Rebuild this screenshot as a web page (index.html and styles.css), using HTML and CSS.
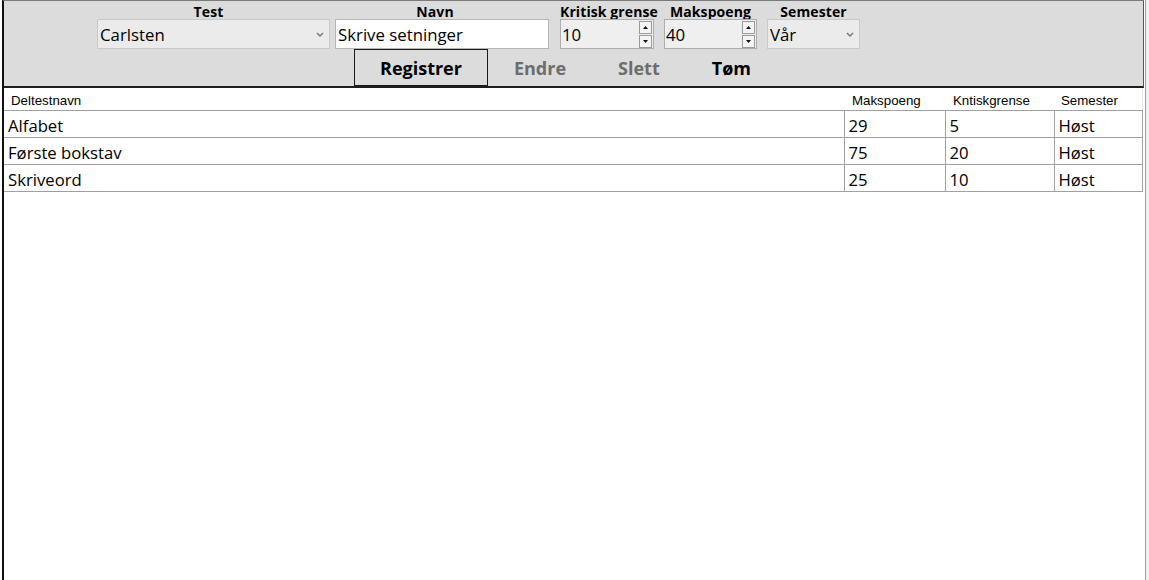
FILE: index.html
```html
<!DOCTYPE html>
<html>
<head>
<meta charset="utf-8">
<link rel="stylesheet" href="styles.css">
</head>
<body>
<div class="app">
  <div class="frame">
    <div class="panel">
      <div class="fields">
        <div class="field f-test">
          <div class="label">Test</div>
          <div class="select">
            <span>Carlsten</span>
            <svg class="chev" width="8" height="5" viewBox="0 0 8 5"><path d="M1 1 L4 4 L7 1" fill="none" stroke="#777" stroke-width="1.4"/></svg>
          </div>
        </div>
        <div class="field f-navn">
          <div class="label">Navn</div>
          <div class="text">Skrive setninger</div>
        </div>
        <div class="field f-krit">
          <div class="label">Kritisk grense</div>
          <div class="spin">
            <span>10</span>
            <div class="spinbtns">
              <div class="sb"><svg width="5" height="3" viewBox="0 0 5 3"><path d="M0 3 L2.5 0 L5 3Z" fill="#111"/></svg></div>
              <div class="sb"><svg width="5" height="3" viewBox="0 0 5 3"><path d="M0 0 L2.5 3 L5 0Z" fill="#111"/></svg></div>
            </div>
          </div>
        </div>
        <div class="field f-maks">
          <div class="label">Makspoeng</div>
          <div class="spin">
            <span>40</span>
            <div class="spinbtns">
              <div class="sb"><svg width="5" height="3" viewBox="0 0 5 3"><path d="M0 3 L2.5 0 L5 3Z" fill="#111"/></svg></div>
              <div class="sb"><svg width="5" height="3" viewBox="0 0 5 3"><path d="M0 0 L2.5 3 L5 0Z" fill="#111"/></svg></div>
            </div>
          </div>
        </div>
        <div class="field f-sem">
          <div class="label">Semester</div>
          <div class="select">
            <span>Vår</span>
            <svg class="chev" width="8" height="5" viewBox="0 0 8 5"><path d="M1 1 L4 4 L7 1" fill="none" stroke="#777" stroke-width="1.4"/></svg>
          </div>
        </div>
      </div>
      <div class="buttons">
        <div class="btn focused">Registrer</div>
        <div class="btn disabled">Endre</div>
        <div class="btn disabled">Slett</div>
        <div class="btn">Tøm</div>
      </div>
    </div>
    <div class="tablewrap">
      <table class="grid">
        <thead>
          <tr>
            <th class="c1">Deltestnavn</th>
            <th class="c2">Makspoeng</th>
            <th class="c3">Kntiskgrense</th>
            <th class="c4">Semester</th>
          </tr>
        </thead>
        <tbody>
          <tr><td class="c1">Alfabet</td><td class="c2">29</td><td class="c3">5</td><td class="c4">Høst</td></tr>
          <tr><td class="c1">Første bokstav</td><td class="c2">75</td><td class="c3">20</td><td class="c4">Høst</td></tr>
          <tr><td class="c1">Skriveord</td><td class="c2">25</td><td class="c3">10</td><td class="c4">Høst</td></tr>
        </tbody>
      </table>
    </div>
  </div>
</div>
</body>
</html>
```
FILE: styles.css
```css
html {
  background: #f0f0f0;
}
body {
  margin: 0;
  font-family: "Open Sans", "DejaVu Sans", sans-serif;
  color: #000;
}
.app {
  width: 1146px;
  height: 580px;
  background: #fff;
  border-right: 1px solid #a0a0a0;
  box-sizing: border-box;
  padding-left: 2px;
}
.frame {
  height: 580px;
  border-left: 2px solid #111;
  border-top: 1px solid #7a7a7a;
  box-sizing: border-box;
  width: 1142px;
}
.panel {
  background: #dcdcdc;
  height: 87px;
  border-bottom: 2px solid #1e1e1e;
  border-right: 1px solid #555;
  box-sizing: border-box;
}
.fields {
  display: flex;
  padding-left: 93px;
  padding-top: 2px;
}
.field {
  display: flex;
  flex-direction: column;
  align-items: center;
}
.label {
  font-weight: 700;
  font-size: 14px;
  line-height: 16px;
  height: 16px;
  padding-top: 1px;
  margin-bottom: -1px;
  white-space: nowrap;
  letter-spacing: 0.1px;
}
.f-test { width: 233px; }
.f-test .label { margin-right: 10px; }
.f-navn { width: 214px; margin-left: 5px; }
.f-navn .label { margin-right: 14px; }
.f-krit { width: 97px; margin-left: 11px; align-items: flex-start; }
.f-maks { width: 93px; margin-left: 7px; }
.f-sem { width: 93px; margin-left: 10px; }
.select, .text, .spin {
  height: 30px;
  box-sizing: border-box;
  display: flex;
  align-items: center;
  font-size: 16.8px;
  width: 100%;
  position: relative;
}
.select {
  background: #ebebeb;
  border: 1px solid #c9c9c9;
  padding-left: 2px;
  justify-content: space-between;
  padding-right: 5px;
}
.text {
  background: #fff;
  border: 1px solid #b5b5b5;
  padding-left: 2px;
}
.spin {
  background: #efefef;
  border: 1px solid #adadad;
  padding-left: 1px;
  justify-content: space-between;
  padding-right: 1px;
  width: 94px;
}
.f-maks .spin { width: 93px; }
.spinbtns {
  display: flex;
  flex-direction: column;
  gap: 1px;
}
.sb {
  width: 11px;
  height: 11px;
  border: 1px solid #9a9a9a;
  background: #f4f4f4;
  display: flex;
  align-items: center;
  justify-content: center;
}
.buttons {
  display: flex;
  padding-left: 350px;
  margin-top: 0;
}
.btn {
  height: 37px;
  box-sizing: border-box;
  display: flex;
  align-items: center;
  padding: 0 25px;
  font-weight: 700;
  font-size: 18px;
  border: 1px solid transparent;
}
.btn.focused {
  border-color: #1a1a1a;
}
.btn.disabled {
  color: #6d6d6d;
}
.tablewrap {
  width: 1140px;
}
.grid {
  border-collapse: collapse;
  width: 1138px;
  table-layout: fixed;
}
.grid th {
  font-family: "Liberation Sans", Arial, sans-serif;
  font-weight: 400;
  font-size: 13.3px;
  text-align: left;
  height: 22px;
  padding: 3px 0 0 0;
  box-sizing: border-box;
  border-bottom: 1px solid #a0a0a0;
  vertical-align: middle;
}
.grid th.c1 { padding-left: 7px; }
.grid th.c2 { padding-left: 8px; }
.grid th.c3 { padding-left: 8px; }
.grid th.c4 { padding-left: 7px; border-right: 1px solid #e4e8f0; }
.grid td {
  font-size: 16.7px;
  height: 27px;
  box-sizing: border-box;
  border: 1px solid #a0a0a0;
  padding: 5px 0 0 4px;
  line-height: 20px;
  white-space: nowrap;
  overflow: hidden;
}
.grid td.c1 { border-left: none; padding-left: 4px; }
.c1 { width: 840px; }
.c2 { width: 101px; }
.c3 { width: 109px; }
.c4 { width: 88px; }
```
